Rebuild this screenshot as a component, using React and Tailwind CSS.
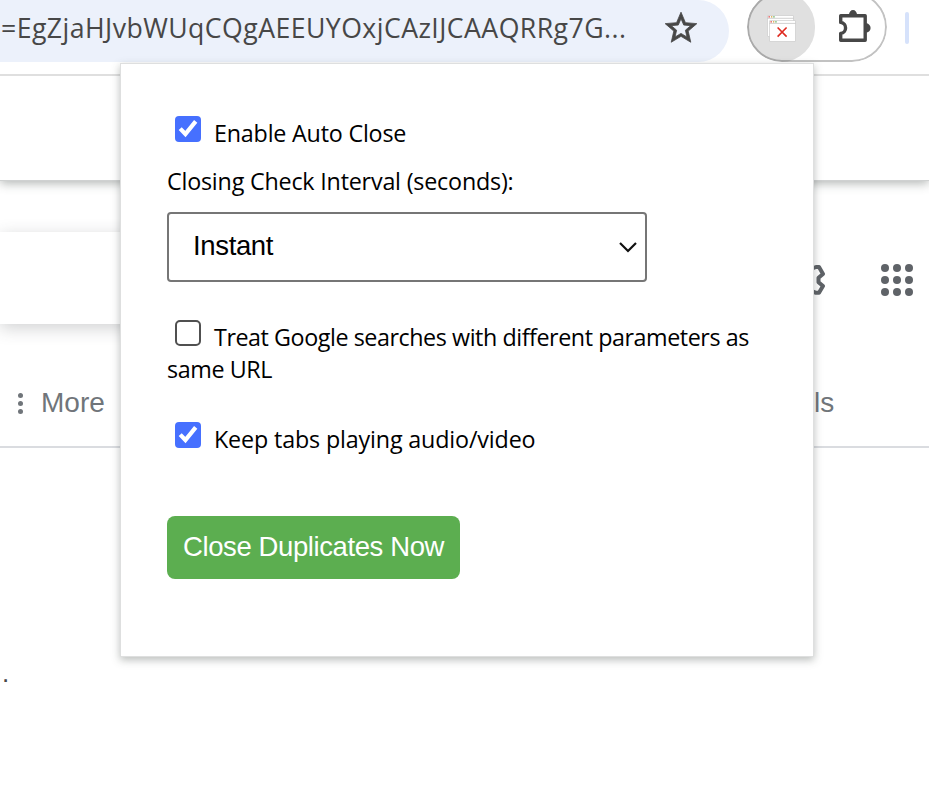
const ui = "font-['Open_Sans','Noto_Sans',sans-serif]";
const arial = "font-['Liberation_Sans',Arial,sans-serif]";

function StarIcon() {
  return (
    <svg width="38" height="38" viewBox="0 0 24 24" fill="#474747" stroke="#474747" strokeWidth="0.5" className="mt-[9px] ml-[35px] shrink-0">
      <path d="M22 9.24l-7.19-.62L12 2 9.19 8.63 2 9.24l5.46 4.73L5.82 21 12 17.27 18.18 21l-1.63-7.03L22 9.24zM12 15.4l-3.76 2.27 1-4.28-3.32-2.88 4.38-.38L12 6.1l1.71 4.04 4.38.38-3.32 2.88 1 4.28L12 15.4z" />
    </svg>
  );
}

function DuplicateTabsIcon() {
  return (
    <svg width="30" height="30" viewBox="766 14 30 30">
      <rect x="767.5" y="15.5" width="26" height="21" rx="0.5" fill="#fff" stroke="#c4c4c4" strokeWidth="0.6" />
      <path d="M767.5 18.3H793.5" stroke="#bdbdbd" strokeWidth="0.7" />
      <rect x="768.5" y="16.2" width="1.3" height="1.3" fill="#d33" />
      <rect x="771" y="16.2" width="1.3" height="1.3" fill="#d9a33a" />
      <rect x="773.3" y="16.2" width="1.3" height="1.3" fill="#5a5" />
      <rect x="769.5" y="20.5" width="26" height="21" rx="0.5" fill="#fff" stroke="#c4c4c4" strokeWidth="0.6" />
      <path d="M769.5 23.4H795.5" stroke="#bdbdbd" strokeWidth="0.7" />
      <rect x="770.5" y="21.2" width="1.3" height="1.3" fill="#d33" />
      <rect x="773" y="21.2" width="1.3" height="1.3" fill="#d9a33a" />
      <rect x="775.3" y="21.2" width="1.3" height="1.3" fill="#5a5" />
      <path d="M777.6 27.5L786.6 36.6M786.6 27.5L777.6 36.6" stroke="#df2a20" strokeWidth="1.6" />
    </svg>
  );
}

function PuzzleIcon() {
  return (
    <svg width="34" height="36" viewBox="838 8 34 36" className="mt-4 ml-[23px]">
      <path
        d="M840.7 15.7H865.2V40.3H840.7V33.4C847.2 32.6 847.2 23.2 840.7 22.4Z"
        fill="none"
        stroke="#474747"
        strokeWidth="3.4"
        strokeLinejoin="round"
      />
      <path d="M849 14.5a4 4.4 0 0 1 8 0ZM866 23.3a4.6 4.6 0 0 1 0 9.2Z" fill="#474747" />
    </svg>
  );
}

function Toolbar() {
  return (
    <header className="relative z-10 flex h-[76px] items-start border-b-2 border-[#dfdfdf] bg-white">
      <div className="flex h-[62px] w-[729px] shrink-0 rounded-br-[31px] rounded-tr-[31px] bg-[#ecf1fb]">
        <span className={`${ui} mt-[9px] w-[627px] shrink-0 whitespace-nowrap pl-px text-[26.67px] leading-[38px] tracking-[0.44px] text-[#474747]`}>
          =EgZjaHJvbWUqCQgAEEUYOxjCAzIJCAAQRRg7G...
        </span>
        <StarIcon />
      </div>
      <div className="relative -mt-2 ml-[18px] flex h-[70px] w-[140px] shrink-0 overflow-hidden rounded-[35px] bg-white">
        <div className="flex h-[70px] w-[68px] shrink-0 justify-center rounded-full bg-[#e0e0e0] pt-[22px]">
          <DuplicateTabsIcon />
        </div>
        <PuzzleIcon />
        <div className="absolute inset-0 rounded-[35px] border-2 border-black/[0.24]" />
      </div>
      <div className="ml-[18px] mt-3 h-8 w-1 rounded-sm bg-[#d6e2fb]" />
    </header>
  );
}

function GearEdge() {
  return (
    <svg width="16" height="34" viewBox="811 263 16 34" className="ml-[811px] mt-[31px]">
      <path
        d="M808 269.5L813.5 268L816 267H819L823 274L818.5 277.8V282.2L823 286L819 292.8H816L808 289.5"
        fill="none"
        stroke="#5f6368"
        strokeWidth="4"
        strokeLinejoin="round"
      />
    </svg>
  );
}

function AppsGrid() {
  return (
    <div className="ml-[54px] mt-8 grid grid-cols-3 gap-1">
      {Array.from({ length: 9 }, (_, i) => (
        <span key={i} className="size-2 rounded-full bg-[#5f6368]" />
      ))}
    </div>
  );
}

function ResultsPage() {
  return (
    <main className={`${arial} text-[#70757a]`}>
      <div className="relative h-[105px] border-b border-[#cfd1d1] bg-white shadow-[0_2px_10px_rgba(60,70,64,0.42)]" />
      <div className="h-[51px]" />
      <div className="flex h-[92px] items-start">
        <div className="-mr-[760px] h-[92px] w-[760px] shrink-0 bg-white shadow-[0_4px_16px_rgba(60,64,67,0.24)]" />
        <div className="relative flex items-start">
          <GearEdge />
          <AppsGrid />
        </div>
      </div>
      <div className="flex h-[124px] items-start border-b-2 border-[#dadce0] pt-[63px] text-[28px] leading-8">
        <div className="ml-[18px] mt-[6px] flex flex-col gap-[3px]">
          <i className="size-[5px] rounded-full bg-[#70757a]" />
          <i className="size-[5px] rounded-full bg-[#70757a]" />
          <i className="size-[5px] rounded-full bg-[#70757a]" />
        </div>
        <span className="ml-[18px] w-[773px]">More</span>
        <span>ls</span>
      </div>
      <p className="ml-0.5 mt-[209px] text-[26px] leading-8 text-[#474747]">.</p>
    </main>
  );
}

function Checkbox({ checked }) {
  return checked ? (
    <span className="ml-2 inline-flex size-[26px] shrink-0 rounded bg-[#4670ff]">
      <svg width="26" height="26" viewBox="0 0 26 26">
        <path d="M5.2 12.6L10.4 18L20.7 5.4" fill="none" stroke="#fff" strokeWidth="4.2" />
      </svg>
    </span>
  ) : (
    <span className="ml-2 inline-flex size-[26px] shrink-0 rounded-[5px] border-2 border-[#505050] bg-white" />
  );
}

function Popup() {
  return (
    <section
      className={`${ui} absolute left-[120px] top-[63px] z-20 flex h-[594px] w-[694px] flex-col border border-[#dedfdf] bg-white pl-[46px] pt-[52px] text-[23.3px] leading-8 text-black shadow-[0_3px_8px_rgba(60,68,64,0.35)]`}
    >
      <label className="flex h-[49px] items-start">
        <Checkbox checked />
        <span className="ml-[13px] mt-px whitespace-nowrap tracking-[-0.2px]">Enable Auto Close</span>
      </label>
      <p className="h-[47px] whitespace-nowrap tracking-[-0.2px]">Closing Check Interval (seconds):</p>
      <div className="flex h-[70px] w-[480px] items-center justify-between rounded border-2 border-[#767676] pl-6 pr-[7px]">
        <span className={`${arial} -mt-0.5 text-[27.5px] leading-8 tracking-[-0.35px]`}>Instant</span>
        <svg width="20" height="14" viewBox="0 0 20 14">
          <path d="M2 3L10 11L18 3" fill="none" stroke="#101010" strokeWidth="2.2" />
        </svg>
      </div>
      <label className="mt-[38px] flex h-[102px] flex-col">
        <span className="flex h-8 items-start">
          <Checkbox />
          <span className="ml-[13px] mt-px whitespace-nowrap tracking-[-0.44px]">Treat Google searches with different parameters as</span>
        </span>
        <span className="mt-px tracking-[-0.4px]">same URL</span>
      </label>
      <label className="flex h-[94px] items-start">
        <Checkbox checked />
        <span className="ml-[13px] mt-px whitespace-nowrap tracking-[-0.15px]">Keep tabs playing audio/video</span>
      </label>
      <button className={`${arial} h-[63px] w-[293px] whitespace-nowrap rounded-lg bg-[#5cae50] pb-0.5 text-[27.5px] leading-8 tracking-[-0.4px] text-white`}>
        Close Duplicates Now
      </button>
    </section>
  );
}

export default function App() {
  return (
    <div className="relative h-[797px] w-[929px] overflow-hidden bg-white">
      <Toolbar />
      <ResultsPage />
      <Popup />
    </div>
  );
}
